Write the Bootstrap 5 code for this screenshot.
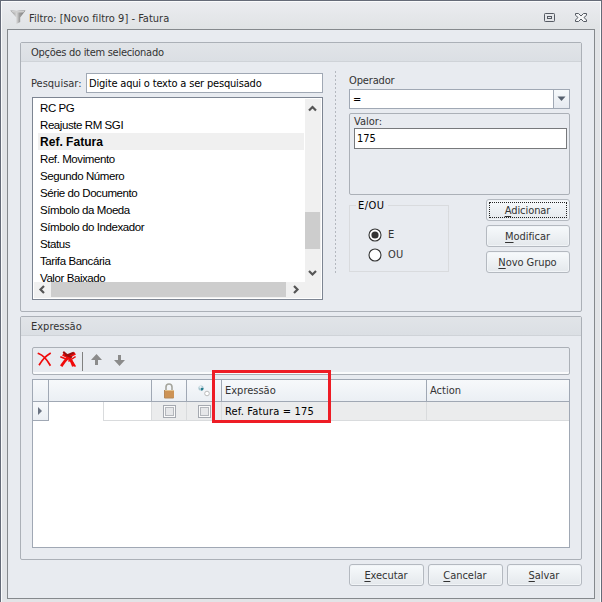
<!DOCTYPE html>
<html lang="pt-BR">
<head>
<meta charset="utf-8">
<title>Filtro</title>
<link rel="stylesheet" href="https://cdn.jsdelivr.net/npm/bootstrap@5.3.0/dist/css/bootstrap.min.css">
<style>
*{border-radius:0}
body{width:602px;height:602px;overflow:hidden;font:11px/14px "DejaVu Sans Condensed","DejaVu Sans",sans-serif;color:#333;background:#e2e4e7}
.win{width:602px;height:602px;border:1px solid #656b78;border-bottom:0;box-shadow:inset 1px 1px #fafbfc,inset -1px 0 #fafbfc;background:linear-gradient(#ebecf0,#e0e3e5 28px,#e2e4e7 29px);padding:0 6px 3px}
.titlebar{height:28px;padding:5px 8px 0 3px}
.titlebar svg,.tools svg{flex:none;display:block}
.funnel{margin-top:4px}
.title{margin:5px 0 0 3px;letter-spacing:.01px;padding-top:1px}
.winbtns{margin-top:7px;gap:20px}
.frame{height:570px;border:1px solid #85898d;background:#e8ebf0;padding:12px}
.group{border:1px solid #abb0b7;border-radius:2px}
.ghead{height:19px;background:linear-gradient(#e1e4e8,#dbdfe4);border-bottom:1px solid #cfd3d8;padding:2px 10px;line-height:15px}
.tight{letter-spacing:-.28px}
.g1{height:270px}.g2{height:244px;margin-top:4px}
.left{width:292px;margin:11px 0 0 10px}
.field{border:1px solid #a0a8b4;background:#fff;color:#000}
.search{width:237px;height:20px;padding:3px 0 0 2px;letter-spacing:-.18px}
.lbl{padding-top:1px}
.list{margin:4px 0 0 1px;width:291px;height:203px;border:1px solid #7d8592;background:#fff;padding:1px;color:#000}
.items{width:271px;height:183px;overflow:hidden;font:11.500px/18px "Liberation Sans",sans-serif;padding-left:4px;flex:none;letter-spacing:-.42px}
.items div{height:17px;padding-left:2px;width:266px;white-space:pre}
.items .sel{background:#f0f0f0;font-weight:bold;font-size:12px;letter-spacing:.02px}
.vbar{width:16px;height:183px;background:#f0f0f0}
.vthumb{width:15px;height:37px;background:#cdcdcd}
.hbar{height:16px;width:287px;background:#f0f0f0}
.hthumb{width:235px;height:15px;background:#cdcdcd}
.dots{width:1px;height:202px;margin:9px 0 0 12px;background:repeating-linear-gradient(#b4b8bf 0 2px,transparent 2px 4px)}
.right{width:221px;margin:11px 0 0 13px}
.oper{height:14px;padding-top:1px;letter-spacing:-.15px}
.combo{width:221px;height:20px;margin-top:2px}
.combo .val{padding:3px 3px}
.combo .drop{width:16px;border-left:1px solid #a0a8b4;background:linear-gradient(#f6f9fb,#e6eaf0)}
.valor{height:82px;margin-top:4px;padding:1px 2px 0 4px}
.vlabel{line-height:13px}
.valor .field{border-color:#77797c;height:21px;padding:3px 0 0 2px;line-height:14px}
.lower{margin-top:4px}
.eou{width:100px;height:73px;border:1px solid #d9dbde;padding:0 0 0 6px;margin:0;min-width:0}
.eou legend{font-size:11px;line-height:14px;letter-spacing:.45px;float:none;width:32px;height:13px;padding:0 1px 0 2px;margin:0;background:#e8ebf0;color:#000}
.eou .sp{height:13px}
.opt{height:20px;padding-left:12px;letter-spacing:.3px}
.opt svg{margin-right:6px}
.cmd{display:block;border:1px solid #b4b9c0;border-radius:3px;background:linear-gradient(#f7fafc,#e4e8ec);height:22px;line-height:18px;padding:1px 0;text-align:center;font-size:11px;color:#333;box-shadow:inset 0 0 0 1px #f1f4f7;font-family:inherit}
.cmd u{text-underline-offset:2px}
.cmds .cmd{width:84px;margin-bottom:4px;padding:2px 1px 0 0;letter-spacing:-.06px}
.focus{position:relative}
.focus::after{content:"";position:absolute;inset:2px;border:1px dotted #222}
.foot{margin-top:4px}
.foot .cmd{width:75px;letter-spacing:-.05px;padding:2px 1px 0 0}
.tools{height:28px;margin:11px 11px 0;box-shadow:inset 0 -2px #fafbfc;padding:0 4px}
.grid{width:538px;height:169px;margin:4px 0 0 11px;border:1px solid #a0a8b4;background:#fff;position:relative;display:grid;grid-template-columns:16px 103px 35px 35px 205px 142px;grid-template-rows:22px 19px}
.hd{border-right:1px solid #a0a8b4;border-bottom:1px solid #a0a8b4;background:linear-gradient(#f7f9fb,#ebeff4)}
.cel{border-right:1px solid #d9dbdd;border-bottom:1px solid #d9dbdd;background:#ebeced}
.hd,.cel{display:flex;align-items:center;white-space:pre}
.blank{margin-left:54px;background:#fff;border-left:1px solid #d9dbdd}
.txt{padding-left:3px}.mid{justify-content:center}
.expr{color:#000;letter-spacing:.18px;padding-top:1px}
.last{border-right:0}
.mark-red{position:absolute;left:179px;top:-10px;width:119px;height:53px;border:3px solid #ee1c25}
.chk{width:13px;height:13px;border:1px solid #a5a9b0;background:#e6e7e9;box-shadow:inset 0 0 0 1px #fafafa,inset 0 0 0 2px #b4b7bc}
</style>
</head>
<body>
<div class="win">
 <div class="titlebar d-flex align-items-start">
  <svg class="funnel" width="16" height="15" viewBox="0 0 16 15"><defs><linearGradient id="f"><stop stop-color="#8a8a8a"/><stop offset=".42" stop-color="#d6d6d6"/><stop offset=".6" stop-color="#a0a0a0"/><stop offset="1" stop-color="#777"/></linearGradient></defs><path d="M.3 .5h15.200L10.200 7.500v4.500L6.300 14V7.500z" fill="url(#f)"/><path d="M1.200 1h13.400l-1.200 1.500H2.600z" fill="#cfcfcf"/></svg>
  <span class="title">Filtro: [Novo filtro 9] - Fatura</span>
  <div class="ms-auto d-flex winbtns"><svg width="11" height="10"><rect x=".5" y=".5" width="10" height="8" rx=".8" fill="none" stroke="#555a63"/><rect x="3.500" y="3.500" width="4" height="2" fill="none" stroke="#555a63"/></svg>
  <svg width="12" height="11"><path d="M.5 .5h3L6 3 8.500 .5h3v1.800L9 4.500l2.500 2.500v1.500h-3L6 6 3.500 8.500h-3V7L3 4.500 .5 2.300z" fill="#f5f6f7" stroke="#555a63"/></svg></div>
 </div>
 <div class="frame">
  <section class="group g1">
   <div class="ghead tight">Opções do item selecionado</div>
   <div class="d-flex">
    <div class="left">
     <div class="d-flex align-items-center justify-content-between"><span class="lbl">Pesquisar:</span><div class="field search">Digite aqui o texto a ser pesquisado</div></div>
     <div class="list">
      <div class="d-flex">
       <div class="items"><div>RC PG</div><div>Reajuste RM SGI</div><div class="sel">Ref. Fatura</div><div>Ref. Movimento</div><div>Segundo Número</div><div>Série do Documento</div><div>Símbolo da Moeda</div><div>Símbolo do Indexador</div><div>Status</div><div>Tarifa Bancária</div><div>Valor Baixado</div></div>
       <div class="vbar d-flex flex-column"><svg width="15" height="113"><path d="M4 11.500l3.500-3.500 3.500 3.500" fill="none" stroke="#555" stroke-width="2.200"/></svg><div class="vthumb"></div><svg width="15" height="33"><path d="M4 22l3.500 3.500L11 22" fill="none" stroke="#555" stroke-width="2.200"/></svg></div>
      </div>
      <div class="hbar d-flex"><svg width="17" height="16"><path d="M10 4L6.500 7.500 10 11" fill="none" stroke="#555" stroke-width="2.200"/></svg><div class="hthumb"></div><svg width="17" height="16"><path d="M8 4l3.500 3.500L8 11" fill="none" stroke="#555" stroke-width="2.200"/></svg></div>
     </div>
    </div>
    <div class="dots"></div>
    <div class="right">
     <div class="oper">Operador</div>
     <div class="field combo d-flex"><span class="flex-grow-1 val">=</span><span class="drop"><svg width="15" height="18" class="d-block"><path d="M3.500 6.500h8l-4 4.500z" fill="#555f6d"/></svg></span></div>
     <div class="group valor"><div class="vlabel">Valor:</div><div class="field">175</div></div>
     <div class="d-flex justify-content-between align-items-start lower">
      <fieldset class="eou"><legend>E/OU</legend>
       <div class="sp"></div>
       <div class="opt d-flex align-items-center"><svg width="14" height="14"><circle cx="7" cy="7" r="6" fill="#fff" stroke="#333" stroke-width="1.100"/><circle cx="7" cy="7" r="3.600" fill="#333"/></svg>E</div>
       <div class="opt d-flex align-items-center"><svg width="14" height="14"><circle cx="7" cy="7" r="6" fill="#fff" stroke="#333" stroke-width="1.100"/></svg>OU</div>
      </fieldset>
      <div class="cmds"><button class="cmd focus"><u>A</u>dicionar</button><button class="cmd"><u>M</u>odificar</button><button class="cmd"><u>N</u>ovo Grupo</button></div>
     </div>
    </div>
   </div>
  </section>
  <section class="group g2">
   <div class="ghead">Expressão</div>
   <div class="group tools d-flex">
    <svg width="90" height="26">
     <g fill="none" stroke="#f00a0a" stroke-linecap="square"><path d="M1.500 5.500Q8 8 13 17M13 5.500Q7 9 2.500 16.500" stroke-width="1.700"/><path d="M27 7q7 3 9 10M37 6q-7 3-12 11" stroke-width="2.800"/><path d="M24 9l5 2M33 10l5 8M38 9l-6 4" stroke-width="1.500"/><path d="M27 4.500l3 2.500M31 7l5-2M29 7l5 2" stroke="#9b0c0c" stroke-width="2"/></g>
     <path d="M45.500 4v19" stroke="#808080"/>
     <path d="M59.500 6l5.500 6h-4v5h-3v-5h-4zM82.500 18l5.500-6h-4V7h-3v5h-4z" fill="#8b8b8b"/>
    </svg>
   </div>
   <div class="grid">
    <div class="hd"></div><div class="hd"></div>
    <div class="hd mid"><svg width="12" height="17"><path d="M3 8V5a3 3 0 0 1 6 0v3" fill="none" stroke="#a5a59c" stroke-width="1.600"/><rect x="1" y="8" width="10" height="8" fill="#cd9355"/><path d="M1.500 8v8h9" fill="none" stroke="#b5895a"/><path d="M2 8.500h9" stroke="#e2c18d"/></svg></div>
    <div class="hd mid"><svg width="14" height="14"><circle cx="4" cy="4" r="2.600" fill="#a9c6cf"/><path d="M4 4h2.500A2.500 2.500 0 0 1 4 6.600z" fill="#247b8c"/><circle cx="3.500" cy="3" r="1.200" fill="#e7f1f4"/><circle cx="10" cy="9.500" r="2.300" fill="#fff" stroke="#bbb"/></svg></div>
    <div class="hd txt">Expressão</div><div class="hd txt last">Action</div>
    <div class="hd mid"><svg width="5" height="8"><path d="M0 0l4 4-4 4z" fill="#6a7382"/></svg></div>
    <div class="cel blank"></div>
    <div class="cel mid"><span class="chk"></span></div><div class="cel mid"><span class="chk"></span></div>
    <div class="cel txt expr">Ref. Fatura = 175</div><div class="cel last"></div>
    <div class="mark-red"></div>
   </div>
  </section>
  <div class="foot d-flex justify-content-end gap-1"><button class="cmd"><u>E</u>xecutar</button><button class="cmd"><u>C</u>ancelar</button><button class="cmd"><u>S</u>alvar</button></div>
 </div>
</div>
<script src="https://cdn.jsdelivr.net/npm/bootstrap@5.3.0/dist/js/bootstrap.bundle.min.js"></script>
</body>
</html>
